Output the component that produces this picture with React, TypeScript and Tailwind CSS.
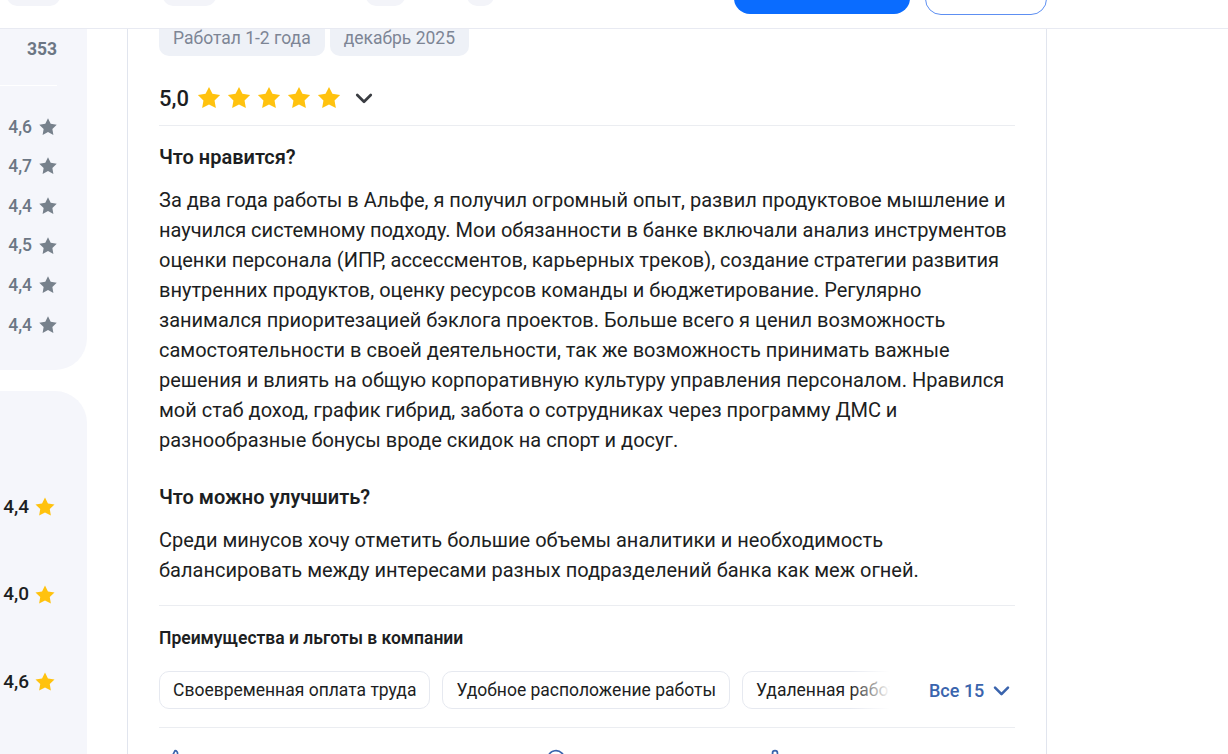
import { ThumbsUp, MessageCircle, Share2 } from 'lucide-react';

const STAR_PATH =
  'M12 2.5l2.94 5.96 6.58.96-4.76 4.64 1.12 6.55L12 17.52l-5.88 3.09 1.12-6.55L2.48 9.42l6.58-.96L12 2.5z';

function Star({ className }: { className: string }) {
  return (
    <svg viewBox="0 0 24 24" className={className} fill="currentColor" aria-hidden>
      <path d={STAR_PATH} />
    </svg>
  );
}

function Chevron({ className }: { className: string }) {
  return (
    <svg viewBox="0 0 16 16" className={className} fill="none" stroke="currentColor" strokeWidth={1.8} aria-hidden>
      <path d="M3.5 6l4.5 4.5L12.5 6" strokeLinecap="round" strokeLinejoin="round" />
    </svg>
  );
}

const topRatings = ['4,6', '4,7', '4,4', '4,5', '4,4', '4,4'];
const bottomRatings = ['4,4', '4,0', '4,6'];
const benefits = ['Своевременная оплата труда', 'Удобное расположение работы', 'Удаленная работа', 'ДМС'];

const likes =
  'За два года работы в Альфе, я получил огромный опыт, развил продуктовое мышление и научился системному подходу. Мои обязанности в банке включали анализ инструментов оценки персонала (ИПР, ассессментов, карьерных треков), создание стратегии развития внутренних продуктов, оценку ресурсов команды и бюджетирование. Регулярно занимался приоритезацией бэклога проектов. Больше всего я ценил возможность самостоятельности в своей деятельности, так же возможность принимать важные решения и влиять на общую корпоративную культуру управления персоналом. Нравился мой стаб доход, график гибрид, забота о сотрудниках через программу ДМС и разнообразные бонусы вроде скидок на спорт и досуг.';

const improve =
  'Среди минусов хочу отметить большие объемы аналитики и необходимость балансировать между интересами разных подразделений банка как меж огней.';

export default function App() {
  return (
    <div className="h-[754px] w-[1228px] overflow-hidden bg-white font-[Roboto,sans-serif] text-[#1c1e22]">
      {/* sticky header, scrolled mostly out of view */}
      <header className="h-[29px] overflow-hidden border-b border-[#e8eaf2]">
        <div className="-mt-[30px] flex items-start">
          <div className="ml-[7px] h-9 w-[53px] rounded-[10px] bg-[#f3f4f9]" />
          <div className="ml-[103px] h-9 w-[53px] rounded-[10px] bg-[#f3f4f9]" />
          <div className="ml-[150px] h-9 w-[39px] rounded-[10px] bg-[#f3f4f9]" />
          <div className="ml-[62px] h-9 w-[27px] rounded-[10px] bg-[#f3f4f9]" />
          <div className="ml-[240px] h-[44px] w-[176px] rounded-[16px] bg-[#0a6cff]" />
          <div className="ml-[15px] h-[45px] w-[122px] rounded-[16px] border border-[#5d8ff2] bg-white" />
        </div>
      </header>

      <main className="flex h-[725px] overflow-hidden">
        {/* left rating column */}
        <aside className="flex w-[87px] shrink-0 flex-col">
          <div className="flex h-[341px] shrink-0 flex-col items-end rounded-br-[32px] bg-[#f5f6fb] pr-[28px]">
            <div className="mt-2 mr-[2px] text-[17.5px] leading-6 font-bold text-[#6c7684]">353</div>
            <div className="mt-6 mr-[2px] h-px shrink-0 self-stretch bg-white" />
            <div className="mt-[21px] flex flex-col">
              {topRatings.map((r, i) => (
                <div key={i} className="flex h-[39.6px] items-center justify-end gap-[5px]">
                  <span className="text-[17.5px] font-medium text-[#6c7684]">{r}</span>
                  <Star className="h-[22px] w-[22px] text-[#77818c]" />
                </div>
              ))}
            </div>
          </div>
          <div className="mt-[21px] flex flex-1 flex-col items-end gap-[47.5px] rounded-tr-[32px] bg-[#f5f6fb] pt-[96px] pr-[30px]">
            {bottomRatings.map((r, i) => (
              <div key={i} className="flex h-10 items-center gap-[4px]">
                <span className="text-[19px] font-medium text-[#1c1e22]">{r}</span>
                <Star className="h-6 w-6 text-[#ffc20e]" />
              </div>
            ))}
          </div>
        </aside>

        {/* review card */}
        <section className="ml-10 flex w-[920px] shrink-0 flex-col border-x border-[#e1e5ee] px-[31px]">
          <div className="-mt-[9px] flex shrink-0 gap-[5px]">
            <span className="flex h-9 items-center rounded-[10px] bg-[#eef1f7] px-[14px] text-[17.5px] text-[#7d8595]">
              Работал 1-2 года
            </span>
            <span className="flex h-9 items-center rounded-[10px] bg-[#eef1f7] px-[14px] text-[17.5px] text-[#7d8595]">
              декабрь 2025
            </span>
          </div>

          <div className="mt-[27px] flex h-[30px] shrink-0 items-center">
            <span className="text-[22px] font-medium">5,0</span>
            <div className="ml-[6px] flex gap-[2px]">
              {[0, 1, 2, 3, 4].map((i) => (
                <Star key={i} className="h-7 w-7 text-[#ffc20e]" />
              ))}
            </div>
            <Chevron className="ml-[9px] h-6 w-6 text-[#3a3d42]" />
          </div>

          <div className="mt-3 h-px shrink-0 bg-[#ebedf1]" />

          <h3 className="mt-[19px] shrink-0 text-[20px] leading-6 font-semibold">Что нравится?</h3>
          <p className="mt-4 shrink-0 text-[20px] leading-[30px]">{likes}</p>

          <h3 className="mt-[30px] shrink-0 text-[20px] leading-6 font-semibold">Что можно улучшить?</h3>
          <p className="mt-4 shrink-0 text-[20px] leading-[30px]">{improve}</p>

          <div className="mt-5 h-px shrink-0 bg-[#ebedf1]" />

          <h4 className="mt-[21px] shrink-0 text-[17.5px] leading-[22px] font-semibold">
            Преимущества и льготы в компании
          </h4>

          <div className="mt-[22px] flex shrink-0 items-center">
            <div className="relative w-[731px] overflow-hidden">
              <div className="flex gap-3">
                {benefits.map((b) => (
                  <span
                    key={b}
                    className="flex h-[38px] shrink-0 items-center rounded-[10px] border border-[#e6e9f0] px-[13px] text-[17.5px] whitespace-nowrap"
                  >
                    {b}
                  </span>
                ))}
              </div>
              <div className="absolute inset-y-0 right-0 w-[40px] bg-gradient-to-r from-white/0 to-white" />
            </div>
            <button className="ml-[39px] flex items-center text-[18px] font-medium text-[#3a64ad]">
              Все 15
              <Chevron className="ml-[6px] h-[23px] w-[23px]" />
            </button>
          </div>

          <div className="mt-[18px] h-px shrink-0 bg-[#ebedf1]" />

          <div className="mt-[21px] flex shrink-0 items-center text-[#3a64ad]">
            <ThumbsUp className="ml-[6px] h-5 w-5" />
            <MessageCircle className="ml-[361px] h-5 w-5" />
            <Share2 className="ml-[194px] h-5 w-5" />
          </div>
        </section>
      </main>
    </div>
  );
}
